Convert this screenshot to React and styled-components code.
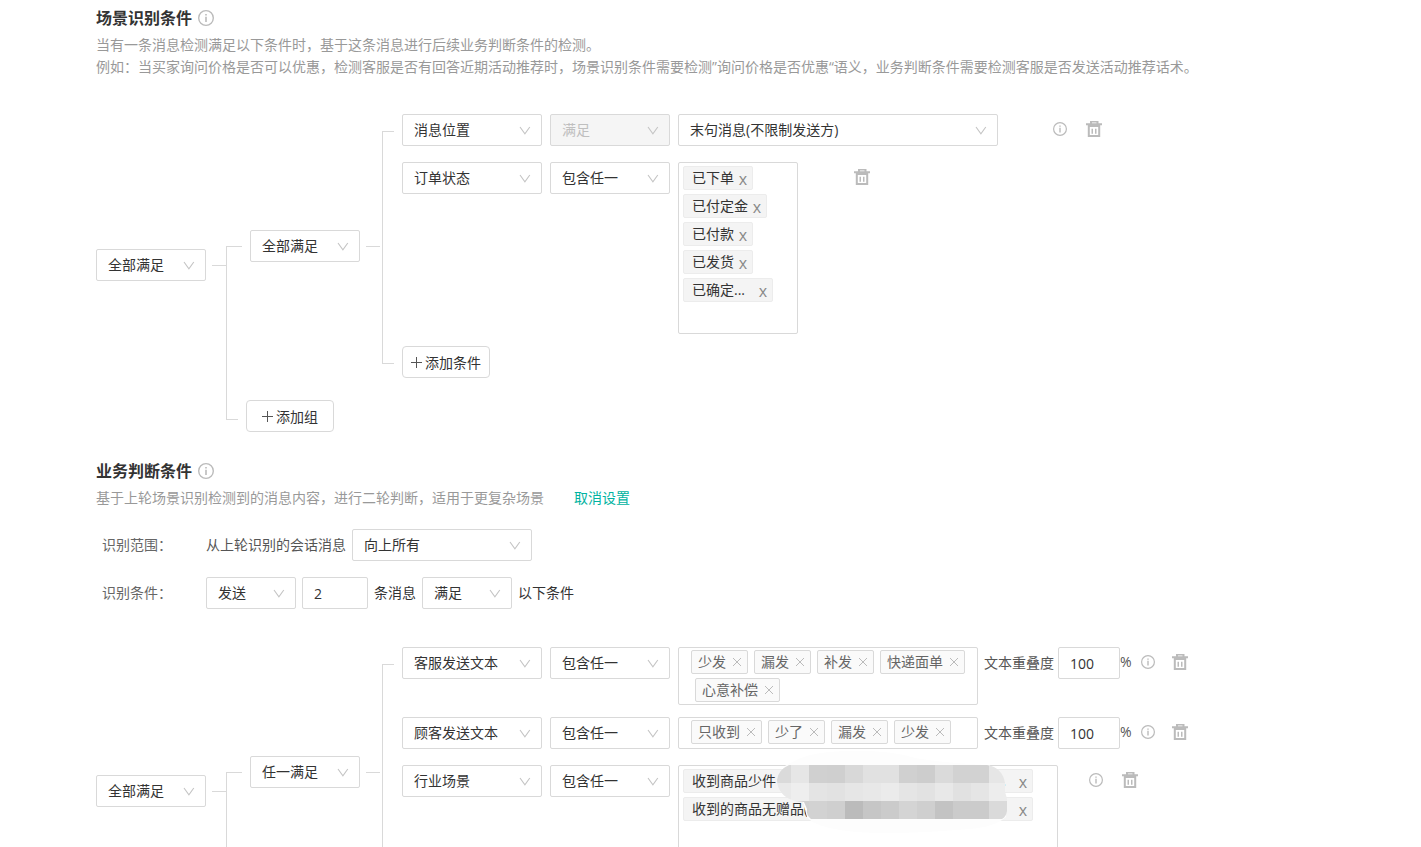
import { useState } from 'react';
import styled, { createGlobalStyle } from 'styled-components';

const GlobalStyle = createGlobalStyle`
  * {
    box-sizing: border-box;
  }
  html {
    scrollbar-width: none;
  }
  body {
    margin: 0;
    background: #fff;
  }
  body, button, input, select {
    font-family: "Open Sans", "Noto Sans CJK SC", sans-serif;
    font-size: 14px;
    color: #333;
  }
`;

const Page = styled.main`
  padding: 6px 0 0 96px;
  white-space: nowrap;
`;

const Section = styled.section`
  margin-bottom: 27px;
`;

const Title = styled.h2`
  display: flex;
  align-items: center;
  gap: 6px;
  margin: 0 0 4px;
  font-size: 16px;
  line-height: 24px;
  font-weight: 700;
`;

const Desc = styled.p`
  margin: 0;
  line-height: 22px;
  color: #999;
`;

const Link = styled.a`
  margin-left: 30px;
  color: #00b3a1;
  text-decoration: none;
`;

const FormRow = styled.div`
  display: flex;
  align-items: center;
  gap: 6px;
  height: 32px;
  margin-top: ${(props) => (props.$first ? 20 : 16)}px;
  line-height: 20px;
`;

const FormLabel = styled.span`
  width: 104px;
  padding-left: 6px;
  color: #666;
`;

const FormText = styled.span`
  color: ${(props) => (props.$muted ? '#555' : '#333')};
`;

const SelectBox = styled.span`
  display: grid;
  flex: none;
  align-items: center;
  width: ${(props) => props.$width}px;
  height: 32px;

  & > * {
    grid-area: 1 / 1;
  }
  svg {
    justify-self: end;
    margin-right: 11px;
    pointer-events: none;
  }
`;

const NativeSelect = styled.select`
  appearance: none;
  width: 100%;
  height: 32px;
  padding: 0 28px 2px 11px;
  border: 1px solid #d9d9d9;
  border-radius: 2px;
  background: #fff;
  outline: none;

  &:disabled {
    background: #f5f5f5;
    color: #bfbfbf;
    opacity: 1;
  }
`;

const NumberInput = styled.input`
  width: ${(props) => props.$width}px;
  height: 32px;
  padding: 1px 11px 0;
  border: 1px solid #d9d9d9;
  border-radius: 2px;
  outline: none;
`;

const Tree = styled.div`
  display: flex;
  align-items: center;
  margin-top: ${(props) => props.$top}px;
`;

const Branches = styled.div`
  padding-top: 16px;
`;

const Stub = styled.span`
  flex: none;
  width: 14px;
  height: 1px;
  margin: 0 ${(props) => props.$gap || 0}px 0 6px;
  background: #d9d9d9;
`;

const Branch = styled.div`
  display: flex;
  gap: 8px;
`;

/* left half of a tree line: runs from the middle of the first child down */
const StartLine = styled.span`
  display: flex;
  flex-direction: column;
  width: 16px;

  &::before {
    content: "";
    flex: 1;
  }
  &::after {
    content: "";
    flex: 1;
    border-top: 1px solid #d9d9d9;
    border-left: 1px solid #d9d9d9;
  }
`;

const EndLine = styled.span`
  width: 12px;
  height: 42px;
  border-left: 1px solid #d9d9d9;
  border-bottom: 1px solid #d9d9d9;
`;

const GroupBox = styled.div`
  display: flex;
  align-items: center;
`;

const Bracket = styled.span`
  align-self: stretch;
  width: 12px;
  margin: 17px 8px 14px 0;
  border: 1px solid #d9d9d9;
  border-right: 0;
`;

const Row = styled.div`
  display: flex;
  align-items: flex-start;
  gap: 8px;
  min-height: 36px;
  margin-bottom: 12px;
`;

const AddButton = styled.button`
  display: flex;
  align-items: center;
  justify-content: center;
  gap: 2px;
  width: 88px;
  height: 32px;
  margin-top: ${(props) => props.$top || 0}px;
  padding: 0;
  border: 1px solid #d9d9d9;
  border-radius: 4px;
  background: #fff;
`;

const TagBox = styled.div`
  position: relative;
  display: flex;
  flex-direction: column;
  align-items: flex-start;
  gap: 4px;
  width: ${(props) => props.$width}px;
  padding: 3px 4px;
  border: 1px solid #d9d9d9;
  border-radius: 2px;
`;

const Tag = styled.span`
  display: flex;
  align-items: center;
  justify-content: space-between;
  gap: 4px;
  width: ${(props) => (props.$width ? `${props.$width}px` : 'auto')};
  height: 24px;
  padding: 0 4px 0 8px;
  border: 1px solid #ececec;
  border-radius: 2px;
  background: #f4f4f4;
  line-height: 20px;
`;

const TagRest = styled.span`
  margin-left: auto;
  margin-right: 8px;
`;

const TagClose = styled.button`
  width: 10px;
  height: 20px;
  padding: 2px 0 0;
  border: 0;
  background: none;
  font-size: 16px;
  line-height: 18px;
  color: #888;
`;

const TagSearch = styled.input`
  width: 60px;
  height: 24px;
  padding: 0;
  border: 0;
  background: none;
  outline: none;
`;

const WordBox = styled.div`
  display: flex;
  flex-wrap: wrap;
  align-content: flex-start;
  row-gap: 4px;
  width: 300px;
  min-height: 32px;
  padding: 2px 8px 2px 12px;
  border: 1px solid #d9d9d9;
  border-radius: 2px;
`;

const Word = styled.span`
  display: flex;
  align-items: center;
  gap: 6px;
  height: 24px;
  margin: 0 2px 0 4px;
  padding: 0 5px 0 6px;
  border: 1px solid #d9d9d9;
  border-radius: 2px;
  background: #fafafa;
  line-height: 20px;
  color: #666;

  &:first-child {
    margin-left: 0;
  }
`;

const IconButton = styled.button`
  display: flex;
  padding: 0;
  border: 0;
  background: none;
`;

const Overlap = styled.label`
  display: flex;
  align-items: center;
  gap: 4px;
  height: 32px;
  margin-left: -2px;
  line-height: 20px;
  color: #555;
`;

const Percent = styled.span`
  width: 13px;
  margin-left: -8px;
  line-height: 30px;
  color: #555;
`;

const Actions = styled.div`
  display: flex;
  align-items: center;
  gap: ${(props) => props.$gap || 17}px;
  height: 30px;
  margin-left: ${(props) => props.$left || 0}px;
`;

const Mosaic = styled.svg`
  position: absolute;
  left: 91px;
  top: -18px;
`;

function Chevron() {
  return (
    <svg width="12" height="12" viewBox="0 0 12 12" fill="none" stroke="#c4c4c4" strokeWidth="1.1">
      <path d="M1 3l4.9 6.8L10.8 3" />
    </svg>
  );
}

function InfoIcon({ size = 14 }) {
  return (
    <svg width={size} height={size} viewBox="0 0 14 14" fill="none" stroke="#bbb">
      <circle cx="7" cy="7" r="6.4" strokeWidth="1.2" />
      <path d="M7 5.8v4.6M7 3.4v1.4" strokeWidth="1.4" />
    </svg>
  );
}

function TrashIcon() {
  return (
    <svg width="16" height="16" viewBox="0 0 16 16" fill="#bbb">
      <path fillRule="evenodd" d="M4 0h8.5v2.3H16v2H0v-2h4zM6 1.4v.9h4.5v-.9z" />
      <path fillRule="evenodd" d="M1.8 4h12.4v12H1.8zM3.8 6v8h8.4V6z" />
      <path d="M5.5 7.7H7v5H5.5zM9 7.7h1.5v5H9z" />
    </svg>
  );
}

function CloseIcon() {
  return (
    <svg width="10" height="10" viewBox="0 0 10 10" stroke="#bbb">
      <path d="M1 1l8 8M9 1l-8 8" />
    </svg>
  );
}

function PlusIcon() {
  return (
    <svg width="12" height="12" viewBox="0 0 12 12" stroke="#555">
      <path d="M5.5 1v11M0 6.5h11" />
    </svg>
  );
}

function Select({ label, value, width, disabled }) {
  return (
    <SelectBox $width={width}>
      <NativeSelect aria-label={label} defaultValue={value} disabled={disabled}>
        <option>{value}</option>
      </NativeSelect>
      <Chevron />
    </SelectBox>
  );
}

function Delete() {
  return (
    <IconButton type="button" aria-label="删除">
      <TrashIcon />
    </IconButton>
  );
}

const SHADES = [
  ['dadada', 'e6e6e6', 'd0d0d0', 'cfcfcf', 'd8d8d8', 'e1e1e1', 'e1e1e1', 'd0d0d0', 'cdcdcd', 'dadada', 'd2d2d2', 'd2d2d2', 'e6e6e6'],
  ['e9e9e9', 'eeeeee', 'e4e4e4', 'e2e2e2', 'e6e6e6', 'e8e8e8', 'ebebeb', 'e5e5e5', 'e2e2e2', 'e8e8e8', 'e1e1e1', 'e5e5e5', 'ededed'],
  ['d0d0d0', 'd0d0d0', 'd2d2d2', 'cfcfcf', 'bbbbbb', 'c6c6c6', 'cbcbcb', 'd4d4d4', 'cfcfcf', 'c3c3c3', 'cbcbcb', 'cbcbcb', 'dadada'],
];

function Redaction() {
  return (
    <Mosaic width="240" height="88" viewBox="-3 -17 240 88" aria-hidden="true">
      <clipPath id="smear">
        <path d="M16 0H214C224 1 231 9 232 18L232 27C234 32 235 38 234 46Q233 52 229 54H38Q33 50 34 44L31 37 22 36C10 33 4 24 4 15Q5 5 16 0Z" />
      </clipPath>
      <path
        d="M12 1Q30 -11 56 -13Q110 -17 142 -7Q170 -2 216 0L228 10 232 30 233 52Q222 62 196 64Q100 72 62 64Q40 60 34 52L30 37 10 30Z"
        fill="#fdfdfd"
      />
      <g clipPath="url(#smear)" shapeRendering="crispEdges">
        {SHADES.map((row, y) =>
          row.map((shade, x) => (
            <rect key={`${x}-${y}`} x={x * 18} y={y * 18} width="18" height="18" fill={`#${shade}`} />
          ))
        )}
      </g>
    </Mosaic>
  );
}

function Tags({ items, width, tagWidth, children }) {
  const [tags, setTags] = useState(items);

  const handleRemove = (name) => {
    setTags((prev) => prev.filter((tag) => tag.name !== name));
  };

  return (
    <TagBox $width={width}>
      {tags.map((tag) => (
        <Tag key={tag.name} $width={tag.width || tagWidth}>
          {tag.name}
          {tag.rest && <TagRest>{tag.rest}</TagRest>}
          <TagClose type="button" aria-label={`移除${tag.name}`} onClick={() => handleRemove(tag.name)}>
            x
          </TagClose>
        </Tag>
      ))}
      <TagSearch type="text" aria-label="搜索" />
      {children}
    </TagBox>
  );
}

function TextRow({ field, items }) {
  const [words, setWords] = useState(items);

  const handleRemove = (word) => {
    setWords((prev) => prev.filter((item) => item !== word));
  };

  return (
    <Row>
      <Select label="条件" value={field} width={140} />
      <Select label="关系" value="包含任一" width={120} />
      <WordBox>
        {words.map((word) => (
          <Word key={word}>
            {word}
            <IconButton type="button" aria-label={`移除${word}`} onClick={() => handleRemove(word)}>
              <CloseIcon />
            </IconButton>
          </Word>
        ))}
      </WordBox>
      <Overlap>
        文本重叠度
        <NumberInput type="text" defaultValue="100" $width={62} />
      </Overlap>
      <Percent>%</Percent>
      <Actions>
        <InfoIcon />
        <Delete />
      </Actions>
    </Row>
  );
}

function Conditions({ top, match, children }) {
  return (
    <Tree $top={top}>
      <Select label="组关系" value="全部满足" width={110} />
      <Stub />
      <Branches>
        <Branch>
          <StartLine />
          <GroupBox>
            <Select label="条件关系" value={match} width={110} />
            <Stub $gap={2} />
            <Bracket />
            <div>
              {children}
              <AddButton type="button">
                <PlusIcon />
                添加条件
              </AddButton>
            </div>
          </GroupBox>
        </Branch>
        <Branch>
          <EndLine />
          <AddButton type="button" $top={22}>
            <PlusIcon />
            添加组
          </AddButton>
        </Branch>
      </Branches>
    </Tree>
  );
}

export default function App() {
  return (
    <Page>
      <GlobalStyle />
      <Section>
        <Title>
          场景识别条件
          <InfoIcon size={16} />
        </Title>
        <Desc>当有一条消息检测满足以下条件时，基于这条消息进行后续业务判断条件的检测。</Desc>
        <Desc>
          例如：当买家询问价格是否可以优惠，检测客服是否有回答近期活动推荐时，场景识别条件需要检测”询问价格是否优惠“语义，业务判断条件需要检测客服是否发送活动推荐话术。
        </Desc>
        <Conditions top={20} match="全部满足">
          <Row>
            <Select label="条件" value="消息位置" width={140} />
            <Select label="关系" value="满足" width={120} disabled />
            <Select label="内容" value="末句消息(不限制发送方)" width={320} />
            <Actions $left={47} $gap={19}>
              <InfoIcon />
              <Delete />
            </Actions>
          </Row>
          <Row>
            <Select label="条件" value="订单状态" width={140} />
            <Select label="关系" value="包含任一" width={120} />
            <Tags
              width={120}
              items={[
                { name: '已下单' },
                { name: '已付定金' },
                { name: '已付款' },
                { name: '已发货' },
                { name: '已确定...', width: 90 },
              ]}
            />
            <Actions $left={48}>
              <Delete />
            </Actions>
          </Row>
        </Conditions>
      </Section>

      <Section>
        <Title>
          业务判断条件
          <InfoIcon size={16} />
        </Title>
        <Desc>
          基于上轮场景识别检测到的消息内容，进行二轮判断，适用于更复杂场景
          <Link href="#cancel">取消设置</Link>
        </Desc>
        <FormRow $first>
          <FormLabel>识别范围：</FormLabel>
          <FormText $muted>从上轮识别的会话消息</FormText>
          <Select label="识别范围" value="向上所有" width={180} />
        </FormRow>
        <FormRow>
          <FormLabel>识别条件：</FormLabel>
          <Select label="消息方向" value="发送" width={90} />
          <NumberInput type="text" aria-label="消息条数" defaultValue="2" $width={66} />
          <FormText>条消息</FormText>
          <Select label="是否满足" value="满足" width={90} />
          <FormText>以下条件</FormText>
        </FormRow>
        <Conditions top={22} match="任一满足">
          <TextRow field="客服发送文本" items={['少发', '漏发', '补发', '快递面单', '心意补偿']} />
          <TextRow field="顾客发送文本" items={['只收到', '少了', '漏发', '少发']} />
          <Row>
            <Select label="条件" value="行业场景" width={140} />
            <Select label="关系" value="包含任一" width={120} />
            <Tags
              width={380}
              tagWidth={350}
              items={[
                { name: '收到商品少件', rest: '...' },
                { name: '收到的商品无赠品(' },
              ]}
            >
              <Redaction />
            </Tags>
            <Actions $left={23} $gap={19}>
              <InfoIcon />
              <Delete />
            </Actions>
          </Row>
        </Conditions>
      </Section>
    </Page>
  );
}
